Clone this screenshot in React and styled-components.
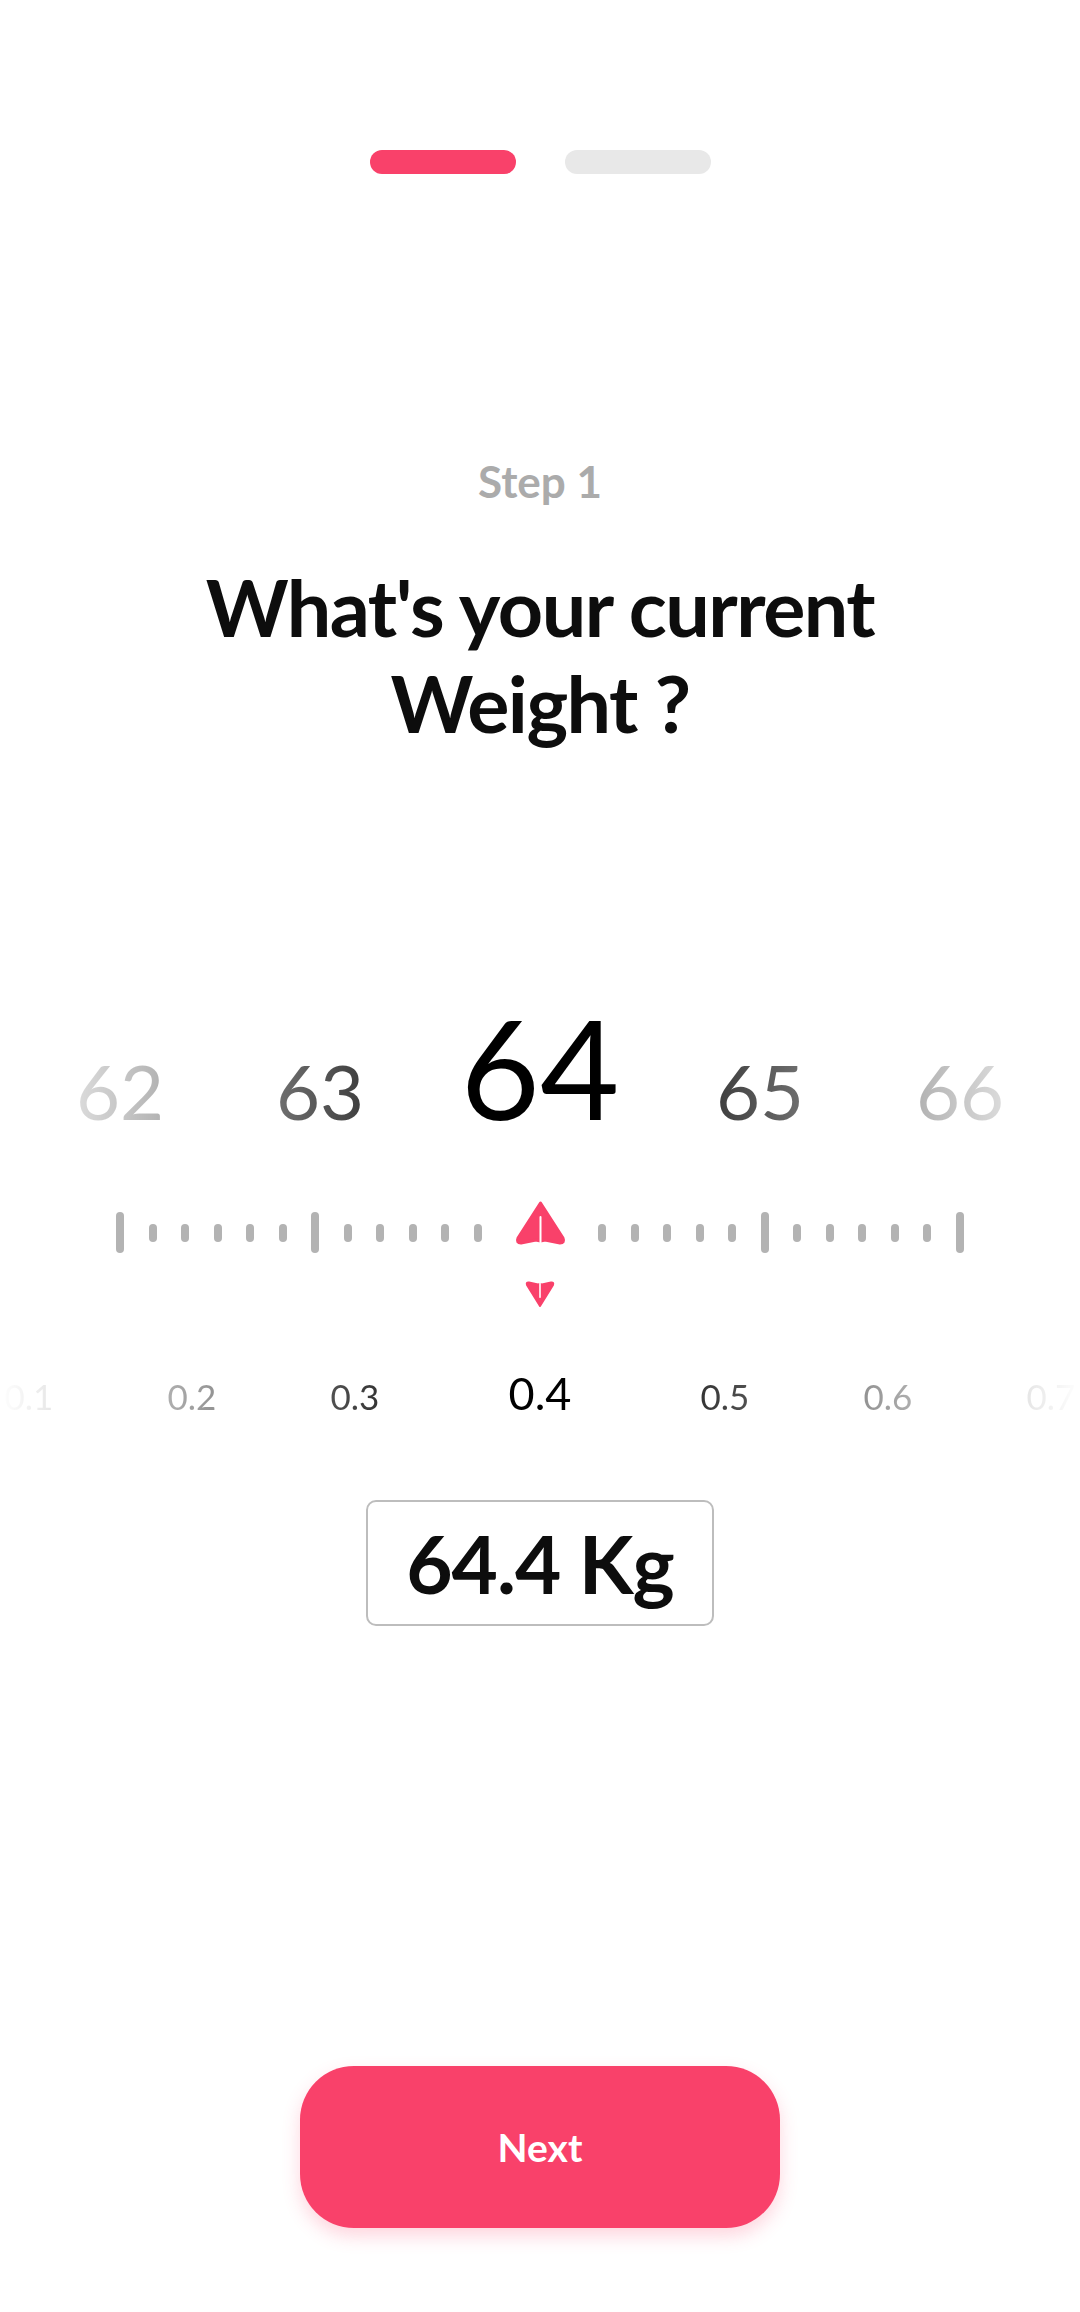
import styled, { createGlobalStyle } from "styled-components";

const PINK = "#f9416a";

const GlobalStyle = createGlobalStyle`
  html, body {
    margin: 0;
    padding: 0;
    background: #ffffff;
    overflow-x: hidden;
  }
  * {
    box-sizing: border-box;
  }
`;

const Page = styled.div`
  min-height: 100vh;
  display: flex;
  flex-direction: column;
  align-items: center;
  padding: 150px 0 84px;
  font-family: "Lato", "Inter", sans-serif;
  overflow: hidden;
`;

const Progress = styled.div`
  display: flex;
  gap: 49px;
`;

const ProgressBar = styled.div`
  width: 146px;
  height: 24px;
  border-radius: 12px;
  background: ${(p) => (p.$active ? PINK : "#e8e8e8")};
`;

const StepLabel = styled.div`
  margin-top: 282px;
  font-size: 44px;
  line-height: 50px;
  font-weight: 700;
  color: #ababab;
`;

const Title = styled.h1`
  margin: 53px 0 0;
  font-size: 79px;
  line-height: 96px;
  font-weight: 700;
  color: #0d0d0d;
  text-align: center;
  letter-spacing: -1.5px;
`;

/* fades the numbers towards both sides of the screen */
const fade = `
  mask-image: linear-gradient(
    to right,
    rgba(0, 0, 0, 0) 0%,
    rgba(0, 0, 0, 0.28) 14%,
    rgba(0, 0, 0, 0.74) 33%,
    #000 43%,
    #000 57%,
    rgba(0, 0, 0, 0.74) 67%,
    rgba(0, 0, 0, 0.28) 86%,
    rgba(0, 0, 0, 0) 100%
  );
`;

const NumberRow = styled.div`
  margin-top: 248px;
  width: 1080px;
  display: flex;
  justify-content: center;
  align-items: baseline;
  ${fade}
`;

const BigNumber = styled.span`
  flex: 0 0 ${(p) => (p.$current ? 240 : 200)}px;
  text-align: center;
  font-size: ${(p) => (p.$current ? 137 : 76)}px;
  line-height: 1;
  font-weight: 400;
  color: #000;
`;

const Ruler = styled.div`
  margin-top: 64px;
  display: flex;
  align-items: flex-start;
`;

const TickGroup = styled.div`
  display: flex;
  align-items: center;
  height: 41px;
  margin-top: 12px;
`;

const TickSlot = styled.div`
  width: 32.5px;
  display: flex;
  justify-content: center;
`;

const Tick = styled.div`
  width: 8px;
  height: ${(p) => (p.$major ? 41 : 18)}px;
  border-radius: 4px;
  background: #b3b3b3;
`;

const Pointer = styled.div`
  width: 92px;
  display: flex;
  flex-direction: column;
  align-items: center;
  gap: 36px;
`;

const DecimalRow = styled.div`
  margin-top: 63px;
  width: 1080px;
  display: flex;
  justify-content: center;
  align-items: baseline;
  ${fade}
`;

const Decimal = styled.span`
  flex: 0 0 ${(p) => (p.$current ? 207 : 163)}px;
  text-align: center;
  font-size: ${(p) => (p.$current ? 45 : 35)}px;
  line-height: 1;
  color: #000;
`;

const ValueBox = styled.div`
  margin-top: 84px;
  width: 348px;
  height: 126px;
  border: 2.5px solid #bdbdbd;
  border-radius: 10px;
  display: flex;
  align-items: center;
  justify-content: center;
  font-size: 80px;
  font-weight: 700;
  color: #0d0d0d;
  letter-spacing: -1px;
`;

const NextButton = styled.button`
  margin-top: auto;
  width: 480px;
  height: 162px;
  border: none;
  border-radius: 54px;
  background: ${PINK};
  color: #ffffff;
  font-family: inherit;
  font-size: 39px;
  font-weight: 700;
  box-shadow: 0 8px 18px rgba(249, 65, 106, 0.22);
  cursor: pointer;
`;

function UpArrow() {
  return (
    <svg width="51" height="45" viewBox="0 0 51 45">
      <path
        d="M25.5 3 L48 38 Q50 43 45 43 L30 40 L25.5 41 L21 40 L6 43 Q1 43 3 38 Z"
        fill={PINK}
        stroke={PINK}
        strokeWidth="3"
        strokeLinejoin="round"
      />
      <rect x="24.5" y="16" width="2" height="29" rx="1" fill="#fff" />
    </svg>
  );
}

function DownArrow() {
  return (
    <svg width="30" height="27" viewBox="0 0 30 27">
      <path
        d="M15 25 L28 4 Q29 1 26 1.5 L17 3.5 L15 3 L13 3.5 L4 1.5 Q1 1 2 4 Z"
        fill={PINK}
        stroke={PINK}
        strokeWidth="2"
        strokeLinejoin="round"
      />
      <rect x="14.2" y="0" width="1.6" height="17" rx="0.8" fill="#fff" />
    </svg>
  );
}

const leftTicks = [true, false, false, false, false, false, true, false, false, false, false, false];
const rightTicks = [false, false, false, false, false, true, false, false, false, false, false, true];

export default function App() {
  return (
    <>
      <GlobalStyle />
      <Page>
        <Progress>
          <ProgressBar $active />
          <ProgressBar />
        </Progress>

        <StepLabel>Step 1</StepLabel>
        <Title>
          What's your current
          <br />
          Weight ?
        </Title>

        <NumberRow>
          <BigNumber>62</BigNumber>
          <BigNumber>63</BigNumber>
          <BigNumber $current>64</BigNumber>
          <BigNumber>65</BigNumber>
          <BigNumber>66</BigNumber>
        </NumberRow>

        <Ruler>
          <TickGroup>
            {leftTicks.map((major, i) => (
              <TickSlot key={i}>
                <Tick $major={major} />
              </TickSlot>
            ))}
          </TickGroup>
          <Pointer>
            <UpArrow />
            <DownArrow />
          </Pointer>
          <TickGroup>
            {rightTicks.map((major, i) => (
              <TickSlot key={i}>
                <Tick $major={major} />
              </TickSlot>
            ))}
          </TickGroup>
        </Ruler>

        <DecimalRow>
          {["0.1", "0.2", "0.3", "0.4", "0.5", "0.6", "0.7"].map((d) => (
            <Decimal key={d} $current={d === "0.4"}>
              {d}
            </Decimal>
          ))}
        </DecimalRow>

        <ValueBox>64.4 Kg</ValueBox>

        <NextButton>Next</NextButton>
      </Page>
    </>
  );
}
